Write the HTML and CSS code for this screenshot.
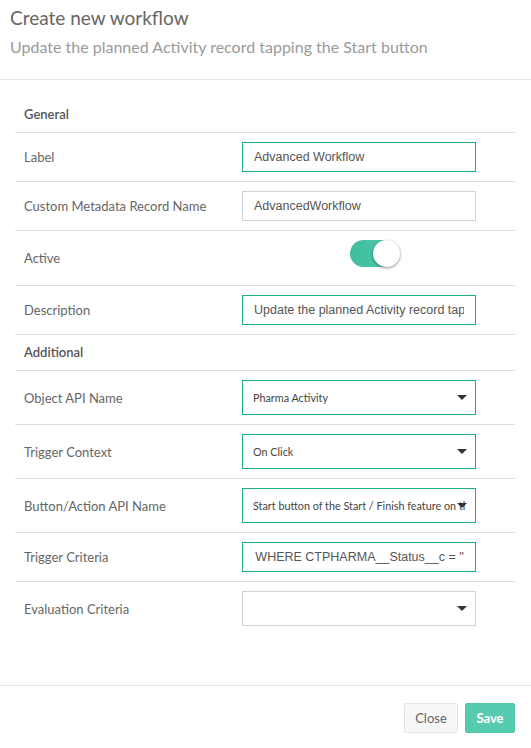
FILE: index.html
```html
<!DOCTYPE html>
<html>
<head>
<meta charset="utf-8">
<link rel="stylesheet" href="styles.css">
</head>
<body>
<div class="modal">
  <div class="modal-header">
    <h1 class="title">Create new workflow</h1>
    <p class="subtitle">Update the planned Activity record tapping the Start button</p>
  </div>
  <div class="modal-body">
    <div class="form">
      <div class="row section"><div class="label">General</div></div>
      <div class="row">
        <div class="label">Label</div>
        <div class="field"><div class="input focus"><span class="txt">Advanced Workflow</span></div></div>
      </div>
      <div class="row">
        <div class="label">Custom Metadata Record Name</div>
        <div class="field"><div class="input"><span class="txt">AdvancedWorkflow</span></div></div>
      </div>
      <div class="row row-toggle">
        <div class="label">Active</div>
        <div class="field field-toggle"><div class="toggle"><span class="knob"></span></div></div>
      </div>
      <div class="row">
        <div class="label">Description</div>
        <div class="field"><div class="input focus"><span class="txt">Update the planned Activity record tapping the Start button</span></div></div>
      </div>
      <div class="row section"><div class="label">Additional</div></div>
      <div class="row">
        <div class="label">Object API Name</div>
        <div class="field"><div class="select focus"><span class="val">Pharma Activity</span><span class="caret"></span></div></div>
      </div>
      <div class="row">
        <div class="label">Trigger Context</div>
        <div class="field"><div class="select focus"><span class="val">On Click</span><span class="caret"></span></div></div>
      </div>
      <div class="row">
        <div class="label">Button/Action API Name</div>
        <div class="field"><div class="select focus"><span class="val">Start button of the Start / Finish feature on the Activity</span><span class="caret"></span></div></div>
      </div>
      <div class="row">
        <div class="label">Trigger Criteria</div>
        <div class="field"><div class="input focus"><span class="txt end"><span>WHERE CTPHARMA__Status__c = ''</span></span></div></div>
      </div>
      <div class="row last">
        <div class="label">Evaluation Criteria</div>
        <div class="field"><div class="select"><span class="val"></span><span class="caret"></span></div></div>
      </div>
    </div>
  </div>
  <div class="modal-footer">
    <button class="btn btn-close">Close</button>
    <button class="btn btn-save">Save</button>
  </div>
</div>
</body>
</html>
```
FILE: styles.css
```css
* { box-sizing: border-box; }
html, body { margin: 0; padding: 0; background: #fff; }
body { font-family: Lato, "Open Sans", sans-serif; color: #666; }

.modal-header {
  padding: 5px 10px 0 10px;
  height: 80px;
  border-bottom: 1px solid #e5e5e5;
}
.title {
  margin: 0;
  font-size: 19px;
  font-weight: 400;
  line-height: 26px;
  color: #666;
}
.subtitle {
  margin: 6px 0 0 0;
  font-size: 16px;
  line-height: 20px;
  color: #9a9a9a;
}

.modal-body {
  padding: 17px 16px 50px 15px;
}
.row {
  display: grid;
  grid-template-columns: 218px 1fr;
  align-items: center;
  padding: 9px 0;
  border-bottom: 1px solid #dedede;
}
.row.last { border-bottom: none; }
.label {
  padding-left: 9px;
  font-size: 13px;
  color: #666;
}
.field { padding-left: 9px; }
.section { padding: 8px 0; }
.section .label {
  line-height: 19px;
  font-weight: 600;
  color: #555;
}
.input {
  display: flex;
  width: 234px;
  height: 30px;
  border: 1px solid #ccd5de;
  padding: 0 11px;
  font-family: "Liberation Sans", Arial, sans-serif;
  font-size: 12.5px;
  line-height: 28px;
  color: #555;
  white-space: nowrap;
}
.txt { display: block; flex: 1; min-width: 0; overflow: hidden; }
.txt.end { display: flex; justify-content: flex-end; }
.txt.end span { flex: none; }
.focus { border-color: #1aae88; }
.select {
  position: relative;
  width: 234px;
  height: 35px;
  border: 1px solid #ccd5de;
  padding: 0 10px 0 10px;
  font-size: 10.8px;
  line-height: 33px;
  color: #444;
  white-space: nowrap;
  overflow: hidden;
}
.select.focus { border-color: #1aae88; }
.val { display: block; overflow: hidden; }
.caret {
  position: absolute;
  right: 8px;
  top: 14px;
  width: 0; height: 0;
  border-left: 5.5px solid transparent;
  border-right: 5.5px solid transparent;
  border-top: 5px solid #333;
}
.row-toggle { align-items: start; }
.row-toggle .label { line-height: 36px; }
.field-toggle { padding-left: 0; display: flex; justify-content: center; height: 36px; }
.toggle {
  position: relative;
  width: 48px;
  height: 27px;
  border-radius: 14px;
  background: linear-gradient(90deg, #3fbe9e, #52c9ad);
}
.knob {
  position: absolute;
  right: -2px;
  top: 0;
  width: 27px;
  height: 27px;
  border-radius: 50%;
  background: #fff;
  box-shadow: 0 1px 3px rgba(0,0,0,0.45);
}

.modal-footer {
  border-top: 1px solid #e5e5e5;
  padding: 17px 16px 0 0;
  display: flex;
  justify-content: flex-end;
  gap: 7px;
}
.btn {
  height: 30px;
  font-family: Lato, sans-serif;
  font-size: 13px;
  border-radius: 2px;
  padding: 0;
}
.btn-close {
  width: 54px;
  background: #f7f7f7;
  border: 1px solid #e3e3e3;
  color: #666;
}
.btn-save {
  width: 50px;
  background: #57cbb0;
  border: 1px solid #53c7ac;
  color: #fff;
  font-weight: 700;
}
```
